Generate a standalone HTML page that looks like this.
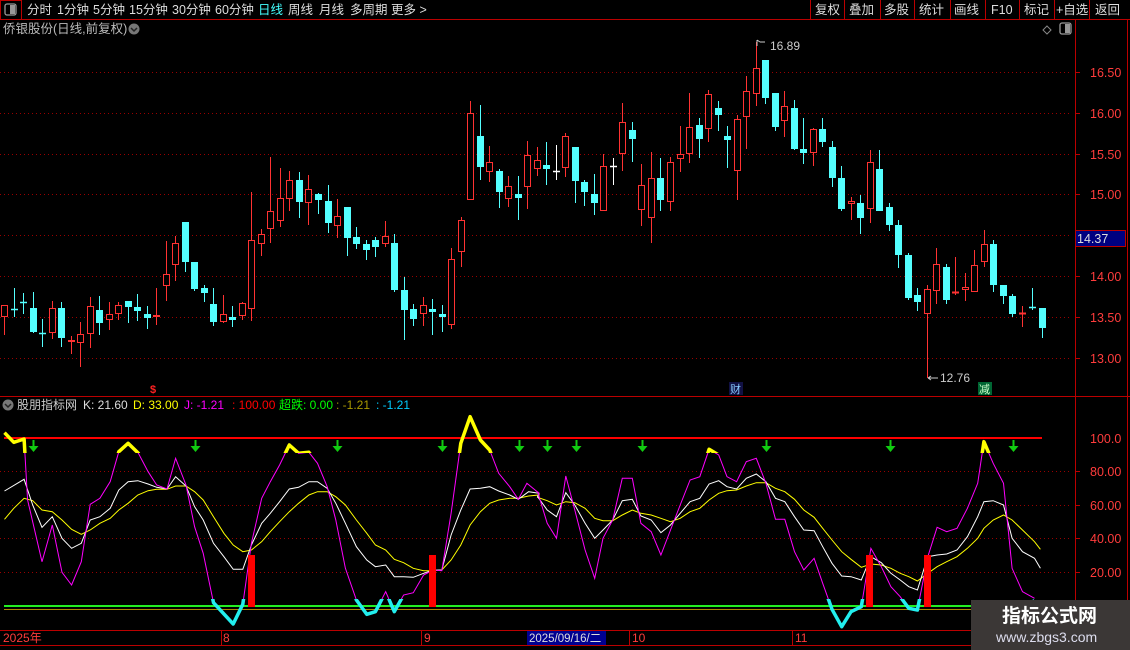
<!DOCTYPE html>
<html><head><meta charset="utf-8"><style>
body{margin:0;background:#000;width:1130px;height:650px;overflow:hidden;font-family:"Liberation Sans","Noto Sans CJK SC",sans-serif;}
svg{position:absolute;left:0;top:0}
text{font-family:"Liberation Sans","Noto Sans CJK SC",sans-serif}
</style></head><body>
<svg id="s" width="1130" height="650" xmlns="http://www.w3.org/2000/svg">
<rect width="1130" height="650" fill="#000"/>
<!-- top toolbar -->
<line x1="0" y1="19.5" x2="1130" y2="19.5" stroke="#b00" />
<rect x="0.5" y="0.5" width="21" height="19" fill="none" stroke="#b00"/>
<rect x="5" y="4" width="11" height="11" rx="2" fill="none" stroke="#999" stroke-width="1.3"/><rect x="10" y="5" width="5" height="9" fill="#999"/>
<g font-size="12.5" fill="#ddd">
<text x="27" y="14">分时</text><text x="57" y="14">1分钟</text><text x="93" y="14">5分钟</text><text x="129" y="14">15分钟</text><text x="172" y="14">30分钟</text><text x="215" y="14">60分钟</text>
<text x="258" y="14" fill="#4ff">日线</text><text x="288" y="14">周线</text><text x="319" y="14">月线</text><text x="350" y="14">多周期</text><text x="391" y="14">更多 &gt;</text>
</g>
<g stroke="#b00"><line x1="810.5" y1="0" x2="810.5" y2="19"/><line x1="844.5" y1="0" x2="844.5" y2="19"/><line x1="880.5" y1="0" x2="880.5" y2="19"/><line x1="914.5" y1="0" x2="914.5" y2="19"/><line x1="950.5" y1="0" x2="950.5" y2="19"/><line x1="985.5" y1="0" x2="985.5" y2="19"/><line x1="1019.5" y1="0" x2="1019.5" y2="19"/><line x1="1054.5" y1="0" x2="1054.5" y2="19"/><line x1="1089.5" y1="0" x2="1089.5" y2="19"/></g>
<g font-size="12.5" fill="#ddd"><text x="815" y="14">复权</text><text x="849" y="14">叠加</text><text x="884" y="14">多股</text><text x="919" y="14">统计</text><text x="954" y="14">画线</text><text x="991" y="14">F10</text><text x="1024" y="14">标记</text><text x="1056" y="14">+自选</text><text x="1095" y="14">返回</text></g>
<text x="3" y="33" font-size="12.5" fill="#bbb">侨银股份(日线,前复权)</text>
<circle cx="134" cy="29" r="5.5" fill="#777"/><path d="M131 28l3 3 3-3" stroke="#222" stroke-width="1.5" fill="none"/>
<path d="M1047 26l4 4-4 4-4-4z" fill="none" stroke="#888"/>
<rect x="1060" y="23" width="11" height="11" rx="2" fill="none" stroke="#999" stroke-width="1.3"/><rect x="1065" y="24" width="5" height="9" fill="#999"/>
<!-- axes -->
<line x1="1075.5" y1="20" x2="1075.5" y2="630" stroke="#b00"/>
<line x1="1127.5" y1="20" x2="1127.5" y2="650" stroke="#b00"/>
<line x1="0" y1="396.5" x2="1130" y2="396.5" stroke="#b00"/>
<line x1="0" y1="630.5" x2="1130" y2="630.5" stroke="#b00"/>
<line x1="0" y1="645.5" x2="1130" y2="645.5" stroke="#b00"/>
<g id="grid"></g>
<g id="c"></g>
<g id="ind"></g>
<!-- price labels -->
<g font-size="12.5" fill="#ff3c3c">
<text x="1090" y="77">16.50</text><text x="1090" y="118">16.00</text><text x="1090" y="159">15.50</text><text x="1090" y="199">15.00</text><text x="1090" y="281">14.00</text><text x="1090" y="322">13.50</text><text x="1090" y="363">13.00</text>
<text x="1090" y="443">100.0</text><text x="1090" y="476">80.00</text><text x="1090" y="510">60.00</text><text x="1090" y="543">40.00</text><text x="1090" y="577">20.00</text>
</g>
<rect x="1075.5" y="230.5" width="50" height="16" fill="#000080" stroke="#b00"/>
<text x="1077" y="243" font-size="12.5" fill="#ddd">14.37</text>
<!-- annotations -->
<path d="M757 40v6M757 40l3 2M760 42h5" stroke="#ccc" fill="none"/><text x="770" y="50" font-size="12" fill="#ccc">16.89</text>
<path d="M928 378h10M928 378l3-2M928 378l3 2" stroke="#ccc" fill="none"/><text x="940" y="382" font-size="12" fill="#ccc">12.76</text>
<text x="150" y="393" font-size="11" fill="#f22" font-weight="bold">$</text>
<rect x="729" y="382" width="14" height="13" fill="#114"/><text x="730" y="393" font-size="11" fill="#8cf">财</text>
<rect x="978" y="382" width="14" height="13" fill="#063"/><text x="979" y="393" font-size="11" fill="#cfc">减</text>
<!-- indicator header -->
<circle cx="8" cy="405" r="5.5" fill="#777"/><path d="M5 404l3 3 3-3" stroke="#222" stroke-width="1.5" fill="none"/>
<text y="409" font-size="12"><tspan x="17" fill="#ccc">股朋指标网</tspan><tspan x="83" fill="#ddd">K: 21.60</tspan><tspan x="133" fill="#ff0">D: 33.00</tspan><tspan x="184" fill="#f0f">J: -1.21</tspan><tspan x="232" fill="#f00">: 100.00</tspan><tspan x="279" fill="#0f0">超跌: 0.00</tspan><tspan x="336" fill="#a90">: -1.21</tspan><tspan x="376" fill="#0cf">: -1.21</tspan></text>
<!-- bottom axis -->
<g font-size="12" fill="#ff3c3c"><text x="3" y="642">2025年</text><text x="223" y="642">8</text><text x="424" y="642">9</text><text x="632" y="642">10</text><text x="795" y="642">11</text></g>
<g stroke="#b00"><line x1="221.5" y1="631" x2="221.5" y2="645"/><line x1="421.5" y1="631" x2="421.5" y2="645"/><line x1="629.5" y1="631" x2="629.5" y2="645"/><line x1="792.5" y1="631" x2="792.5" y2="645"/><line x1="605.5" y1="631" x2="605.5" y2="645"/></g>
<rect x="527" y="631" width="79" height="14" fill="#000090"/><text x="529" y="642" font-size="11.5" fill="#ddd">2025/09/16/二</text>
<!-- watermark -->
<rect x="971" y="600" width="159" height="50" fill="#3b3736"/>
<text x="1002" y="622" font-size="19" font-weight="bold" fill="#fff">指标公式网</text>
<text x="996" y="642" font-size="14" fill="#dde">www.zbgs3.com</text>
</svg>
<script>
var NS="http://www.w3.org/2000/svg",S=document.getElementById('s');
function el(p,t,a){var e=document.createElementNS(NS,t);for(var k in a)e.setAttribute(k,a[k]);p.appendChild(e);return e;}
var g=document.getElementById('grid');
[72,113,154,194,235,276,317,358].forEach(function(y){el(g,'line',{x1:0,x2:1072,y1:y+.5,y2:y+.5,stroke:'#900','stroke-dasharray':'1 3'});el(g,'line',{x1:1075,x2:1080,y1:y+.5,y2:y+.5,stroke:'#b00'});});
[471,505,538,572].forEach(function(y){el(g,'line',{x1:0,x2:1072,y1:y+.5,y2:y+.5,stroke:'#900','stroke-dasharray':'1 3'});el(g,'line',{x1:1075,x2:1080,y1:y+.5,y2:y+.5,stroke:'#b00'});});
// candles: x, hi, lo, bodyTop, bodyBot, color r/c/w
var C=[[4,305,335,305,317,'r'],[14,288,317,309,309,'c'],[23,293,314,302,302,'c'],[33,292,333,308,332,'c'],[42,319,347,333,333,'c'],[52,301,339,308,333,'r'],[61,302,347,308,338,'c'],[71,336,354,340,342,'r'],[80,322,367,334,343,'r'],[90,297,348,306,334,'r'],[99,296,335,310,323,'c'],[109,302,330,314,320,'r'],[118,302,320,305,314,'r'],[128,301,323,301,307,'c'],[137,294,321,307,311,'c'],[147,306,329,314,318,'c'],[156,288,325,315,317,'r'],[166,241,301,274,286,'r'],[175,236,281,243,265,'r'],[185,222,272,222,262,'c'],[194,262,291,262,289,'c'],[204,285,302,288,293,'c'],[213,288,326,304,322,'c'],[223,295,323,314,322,'r'],[232,306,327,317,320,'c'],[242,302,320,303,316,'r'],[251,192,321,240,309,'r'],[261,229,256,234,244,'r'],[270,157,243,211,229,'r'],[280,168,227,198,221,'r'],[289,171,211,180,199,'r'],[299,172,218,180,202,'c'],[308,175,225,189,203,'r'],[318,193,214,194,200,'c'],[328,185,233,201,223,'c'],[337,199,238,216,226,'r'],[347,207,256,207,238,'c'],[356,227,249,237,244,'c'],
[366,240,260,244,250,'c'],[375,237,257,240,247,'c'],[385,221,247,236,244,'r'],[394,234,292,243,290,'c'],[404,277,340,290,310,'c'],[413,304,326,309,319,'c'],[423,297,326,305,314,'r'],[432,299,335,309,312,'c'],[442,305,332,314,317,'c'],[451,248,329,259,325,'r'],[461,217,267,220,252,'r'],[470,101,200,113,200,'r'],[480,105,180,136,167,'c'],[489,146,182,162,172,'r'],[499,169,208,171,192,'c'],[508,176,207,186,199,'r'],[518,176,220,194,198,'c'],[527,141,209,155,187,'r'],[537,147,176,160,169,'r'],[546,142,185,165,169,'c'],[556,145,180,171,171,'w'],[565,133,177,136,168,'r'],[575,147,203,147,181,'c'],[584,180,206,182,192,'c'],[594,174,215,194,203,'c'],[603,154,211,166,211,'r'],[613,158,185,166,166,'w'],[622,103,171,122,154,'r'],[632,122,162,130,139,'c'],[641,164,226,185,210,'r'],[651,152,243,178,218,'r'],[660,158,211,178,200,'c'],[670,157,211,162,202,'r'],[680,126,172,154,159,'r'],[689,93,163,127,154,'r'],[699,118,158,125,139,'c'],[708,90,142,94,129,'r'],
[718,101,131,108,115,'c'],[727,126,168,136,140,'c'],[737,115,200,119,171,'r'],[746,76,149,91,117,'r'],[756,42,106,68,94,'r'],[765,60,104,60,98,'c'],[775,93,131,93,127,'c'],[784,91,137,106,121,'r'],[794,100,150,108,149,'c'],[803,118,164,149,153,'c'],[813,128,166,129,153,'r'],[822,118,147,129,142,'c'],[832,141,187,147,178,'c'],[841,166,211,178,209,'c'],[851,197,220,201,204,'r'],[860,195,234,203,218,'c'],[870,150,223,162,209,'r'],[879,150,211,169,211,'c'],[889,203,231,207,225,'c'],[898,220,268,225,255,'c'],[908,253,300,255,298,'c'],[917,288,311,295,302,'c'],[927,285,378,289,314,'r'],[936,248,304,264,291,'r'],[946,264,304,267,300,'c'],[955,257,295,292,292,'r'],[965,273,301,287,290,'r'],[974,250,292,265,292,'r'],[984,230,267,244,262,'r'],[993,240,292,244,285,'c'],[1003,285,304,285,296,'c'],[1012,294,317,296,314,'c'],[1022,306,327,313,313,'r'],[1032,288,310,307,307,'c'],[1042,308,338,308,328,'c']];
var cg=document.getElementById('c');
C.forEach(function(d){var x=d[0]+.5,col=d[5]=='r'?'#ff3232':d[5]=='c'?'#54ffff':'#fff';
 el(cg,'line',{x1:x,x2:x,y1:d[1],y2:d[2],stroke:col});
 var h=d[4]-d[3];
 if(h<2){el(cg,'line',{x1:x-3.5,x2:x+3.5,y1:d[3]+.5,y2:d[3]+.5,stroke:col,'stroke-width':d[5]=='r'?2:1.5});}
 else if(d[5]=='r'){el(cg,'rect',{x:x-3,y:d[3]+.5,width:6,height:h-1,fill:'#000',stroke:col});}
 else el(cg,'rect',{x:x-3.5,y:d[3],width:7,height:h,fill:col});
});
// indicator
var ig=document.getElementById('ind');
el(ig,'line',{x1:4,x2:1042,y1:438,y2:438,stroke:'#f00','stroke-width':2});
el(ig,'line',{x1:4,x2:1072,y1:606,y2:606,stroke:'#2e2','stroke-width':2});
el(ig,'line',{x1:4,x2:1072,y1:609.5,y2:609.5,stroke:'#aa8800'});
function tr(a,off){var s=1568/540,r=[];for(var i=0;i<a.length;i+=2)r.push((off+a[i]/s).toFixed(1)+','+(410+a[i+1]/3).toFixed(1));return r;}
var J1=[13,68,40,97,70,87,80,270,122,455,152,345,180,487,208,525,236,455,262,283,290,265,320,215,345,125,372,100,402,130,430,185,455,225,485,237,510,145,540,225,565,350,590,430,620,578,677,642,705,583,730,400,760,265,785,215,812,165,840,105,867,130,897,127,922,160,950,230,975,330,1003,475,1035,570,1065,613,1090,605,1120,545,1145,605,1172,555,1200,548,1230,495,1258,480,1283,482,1310,310,1338,100,1365,20,1395,90,1422,120,1448,190,1480,230,1505,268,1530,220,1565,250];
var J2=[0,225,22,245,50,340,77,385,104,198,130,300,160,420,188,505,212,385,240,330,268,205,297,205,322,340,352,365,380,435,408,360,436,285,465,210,493,200,520,118,548,135,572,200,600,215,628,155,657,145,685,220,713,328,740,328,768,425,795,480,825,445,850,520,877,598,905,650,932,605,962,590,990,415,1020,470,1048,530,1075,560,1100,595,1125,600,1155,440,1182,352,1210,365,1240,355,1270,295,1300,220,1318,95,1345,160,1375,220,1400,475,1430,545,1465,565];
var K1=[13,243,70,208,95,285,122,352,152,320,180,385,208,415,236,400,262,330,290,320,320,295,345,240,372,215,400,212,430,222,455,232,485,237,510,200,540,228,565,290,590,330,620,400,650,440,677,478,705,478,730,405,760,340,785,310,812,275,840,237,867,232,897,215,922,215,950,235,975,280,1003,340,1035,410,1065,450,1090,470,1120,465,1145,500,1172,500,1200,502,1230,490,1258,480,1283,480,1310,375,1338,300,1365,237,1395,235,1422,230,1448,243,1480,255,1505,268,1535,245,1565,250];
var K2=[0,250,22,260,50,300,77,320,104,248,130,285,160,340,188,385,212,360,240,330,268,272,297,268,322,318,352,330,380,368,408,345,436,310,465,275,493,265,520,222,548,212,572,230,600,237,628,205,657,192,685,215,713,265,740,275,768,320,795,360,825,362,850,410,877,460,905,498,932,500,962,510,990,440,1020,458,1048,490,1075,510,1100,530,1125,540,1155,440,1182,435,1210,432,1240,420,1270,380,1300,320,1318,275,1345,272,1375,285,1400,385,1430,425,1465,445,1482,475];
var D1=[13,328,40,295,70,265,95,272,122,300,152,305,180,330,208,358,236,373,262,360,290,340,320,325,345,300,372,280,400,255,430,242,455,238,485,238,510,228,540,228,565,245,590,270,620,320,650,370,677,405,705,425,730,420,760,395,785,365,812,335,840,305,867,280,897,255,922,245,950,245,975,260,1003,285,1035,330,1065,370,1090,405,1120,420,1145,448,1172,458,1200,475,1230,482,1258,482,1283,480,1310,450,1338,405,1365,345,1395,305,1422,280,1448,270,1480,265,1505,265,1535,258,1565,255];
var D2=[0,258,22,262,50,272,77,285,104,275,130,278,160,295,188,325,212,332,240,332,268,315,297,300,322,310,352,315,380,325,408,335,436,325,465,305,493,295,520,270,548,250,572,242,600,240,628,228,657,218,685,218,713,235,740,245,768,268,795,300,825,322,850,355,877,390,905,425,932,448,962,472,990,462,1020,465,1048,475,1075,490,1100,500,1125,513,1155,490,1182,470,1210,455,1240,440,1270,415,1300,385,1318,355,1345,330,1375,315,1400,330,1430,360,1465,395,1482,418];
var J=tr(J1,0).concat(tr(J2.slice(2),530)).join(' ');
var K=tr(K1,0).concat(tr(K2.slice(2),530)).join(' ');
var D=tr(D1,0).concat(tr(D2.slice(2),530)).join(' ');
var defs=el(S,'defs',{});
var c1=el(defs,'clipPath',{id:'hi'});el(c1,'rect',{x:0,y:400,width:1072,height:53});
var c2=el(defs,'clipPath',{id:'lo'});el(c2,'rect',{x:0,y:599,width:1072,height:31});
el(ig,'polyline',{points:D,fill:'none',stroke:'#ff0','stroke-width':1});
el(ig,'polyline',{points:K,fill:'none',stroke:'#fff','stroke-width':1});
el(ig,'polyline',{points:J,fill:'none',stroke:'#f0f','stroke-width':1});
el(ig,'polyline',{points:J,fill:'none',stroke:'#ff0','stroke-width':3.5,'clip-path':'url(#hi)','stroke-linejoin':'round'});
el(ig,'polyline',{points:J,fill:'none',stroke:'#2ee','stroke-width':3.5,'clip-path':'url(#lo)','stroke-linejoin':'round'});
[248,429,866,924].forEach(function(x){el(ig,'rect',{x:x,y:555,width:7,height:52,fill:'#f00'});});
[33,195,337,442,519,547,576,642,766,890,1013].forEach(function(x){el(ig,'line',{x1:x+.5,x2:x+.5,y1:440,y2:449,stroke:'#1c1','stroke-width':2});el(ig,'path',{d:'M'+(x-4.5)+' 446h10l-5 6z',fill:'#1c1'});});
</script>
</body></html>
